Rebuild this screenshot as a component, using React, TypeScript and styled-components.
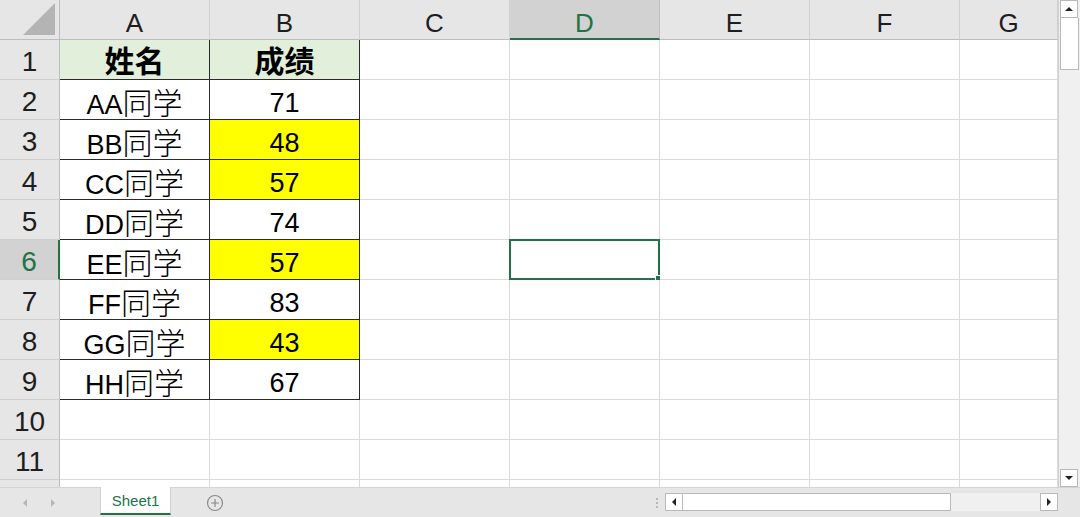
import React from 'react';
import styled, { createGlobalStyle, css } from 'styled-components';

const GlobalStyle = createGlobalStyle`
  html, body {
    margin: 0;
    padding: 0;
    background: #ffffff;
  }
  body {
    font-family: 'Liberation Sans', 'Noto Sans CJK SC', sans-serif;
  }
`;

const green = '#217346';
const gridLine = '#dadada';
const headLine = '#bdbdbd';

const Window = styled.div`
  width: 1080px;
  height: 517px;
  display: flex;
  flex-direction: column;
  overflow: hidden;
`;

const SheetArea = styled.div`
  height: 487px;
  display: flex;
`;

const Grid = styled.div`
  flex: 1;
  display: grid;
  grid-template-columns: 60px repeat(6, 150px) 1fr;
  grid-auto-rows: 40px;
  overflow: hidden;
  align-content: start;
`;

const Corner = styled.div`
  background: #e6e6e6;
  border-right: 1px solid ${headLine};
  border-bottom: 1px solid ${headLine};
  display: flex;
  align-items: flex-end;
  justify-content: flex-end;
  padding: 0 4px 4px 0;
  &::after {
    content: '';
    width: 0;
    height: 0;
    border-left: 32px solid transparent;
    border-bottom: 32px solid #b4b4b4;
  }
`;

const ColHead = styled.div<{ $active?: boolean }>`
  background: ${({ $active }) => ($active ? '#d2d2d2' : '#e6e6e6')};
  color: ${({ $active }) => ($active ? green : '#1e1e1e')};
  border-right: 1px solid ${({ $active }) => ($active ? '#c0c0c0' : '#d0d0d0')};
  border-bottom: ${({ $active }) => ($active ? `2px solid ${green}` : `1px solid ${headLine}`)};
  display: flex;
  align-items: center;
  justify-content: center;
  font-size: 26px;
  line-height: 1;
  padding-top: 7px;
  box-sizing: border-box;
`;

const RowHead = styled.div<{ $active?: boolean }>`
  background: ${({ $active }) => ($active ? '#d2d2d2' : '#e6e6e6')};
  color: ${({ $active }) => ($active ? green : '#1e1e1e')};
  border-right: ${({ $active }) => ($active ? `2px solid ${green}` : `1px solid ${headLine}`)};
  border-bottom: 1px solid #d0d0d0;
  display: flex;
  align-items: center;
  justify-content: center;
  font-size: 28px;
  line-height: 1;
  padding-top: 4px;
  box-sizing: border-box;
`;

type Fill = 'none' | 'title' | 'warn';

const fills: Record<Fill, string> = {
  none: '#ffffff',
  title: '#e2efda',
  warn: '#ffff00',
};

const Cell = styled.div<{ $fill?: Fill; $boxed?: boolean; $selected?: boolean }>`
  position: relative;
  background: ${({ $fill }) => fills[$fill || 'none']};
  border-right: 1px solid ${({ $boxed }) => ($boxed ? '#2b2b2b' : gridLine)};
  border-bottom: 1px solid ${({ $boxed }) => ($boxed ? '#2b2b2b' : gridLine)};
  display: flex;
  align-items: center;
  justify-content: center;
  font-size: 27px;
  color: #000;
  line-height: 27px;
  white-space: nowrap;
  padding-top: ${({ $fill }) => ($fill === 'title' ? 3 : 8)}px;
  box-sizing: border-box;
  ${({ $selected }) =>
    $selected &&
    css`
      &::before {
        content: '';
        position: absolute;
        left: -1px;
        top: -1px;
        right: -1px;
        bottom: -1px;
        border: 2px solid ${green};
      }
      &::after {
        content: '';
        position: absolute;
        right: -3px;
        bottom: -3px;
        width: 5px;
        height: 5px;
        background: ${green};
        border: 1px solid #fff;
      }
    `}
`;

const Value = styled.span`
  display: inline-block;
`;

// Chinese characters sit a little larger than the latin text beside them
const Han = styled.span<{ $bold?: boolean }>`
  font-family: 'Noto Sans CJK SC', sans-serif;
  font-size: 30px;
  line-height: 27px;
  font-weight: ${({ $bold }) => ($bold ? 700 : 300)};
`;

const VScroll = styled.div`
  width: 22px;
  background: #f0f0f0;
  border-left: 1px solid #d0d0d0;
  display: flex;
  flex-direction: column;
  padding: 0 1px;
  box-sizing: border-box;
`;

const ArrowButton = styled.div<{ $dir: 'up' | 'down' | 'left' | 'right' }>`
  width: 18px;
  height: 18px;
  background: #fff;
  border: 1px solid #b9b9b9;
  box-sizing: border-box;
  display: flex;
  align-items: center;
  justify-content: center;
  flex: none;
  &::after {
    content: '';
    width: 0;
    height: 0;
    ${({ $dir }) =>
      $dir === 'up'
        ? css`border-left: 4px solid transparent; border-right: 4px solid transparent; border-bottom: 4px solid #222;`
        : $dir === 'down'
        ? css`border-left: 4px solid transparent; border-right: 4px solid transparent; border-top: 4px solid #222;`
        : $dir === 'left'
        ? css`border-top: 4px solid transparent; border-bottom: 4px solid transparent; border-right: 4px solid #222;`
        : css`border-top: 4px solid transparent; border-bottom: 4px solid transparent; border-left: 4px solid #222;`}
  }
`;

const VThumb = styled.div`
  height: 52px;
  background: #fff;
  border: 1px solid #b9b9b9;
  border-top: none;
  box-sizing: border-box;
`;

const VTrack = styled.div`
  flex: 1;
`;

const TabBar = styled.div`
  height: 30px;
  background: #e6e6e6;
  border-top: 1px solid #d4d4d4;
  box-sizing: border-box;
  display: flex;
  align-items: stretch;
`;

const NavArrows = styled.div`
  width: 100px;
  display: flex;
  align-items: center;
  gap: 24px;
  padding-left: 23px;
  box-sizing: border-box;
`;

const NavArrow = styled.span<{ $right?: boolean }>`
  width: 0;
  height: 0;
  border-top: 4px solid transparent;
  border-bottom: 4px solid transparent;
  ${({ $right }) =>
    $right ? 'border-left: 4px solid #b6b6b6;' : 'border-right: 4px solid #b6b6b6;'}
`;

const SheetTab = styled.div`
  width: 71px;
  height: 28px;
  margin-top: -1px;
  background: #fff;
  border-bottom: 2px solid ${green};
  border-left: 1px solid #d0d0d0;
  border-right: 1px solid #d0d0d0;
  box-sizing: border-box;
  display: flex;
  align-items: center;
  justify-content: center;
  color: ${green};
  font-family: 'Liberation Sans', 'Noto Sans', sans-serif;
  font-size: 15px;
`;

const AddSheet = styled.div`
  width: 88px;
  display: flex;
  align-items: center;
  justify-content: center;
`;

const Spacer = styled.div`
  flex: 1;
`;

const Dots = styled.div`
  width: 17px;
  display: flex;
  flex-direction: column;
  align-items: center;
  justify-content: center;
  gap: 2px;
  span {
    width: 2px;
    height: 2px;
    background: #a8a8a8;
    border-radius: 50%;
  }
`;

const HScroll = styled.div`
  width: 393px;
  display: flex;
  align-items: center;
  margin-top: -1px;
`;

const HThumb = styled.div`
  width: 268px;
  height: 18px;
  background: #fff;
  border: 1px solid #b9b9b9;
  border-left: none;
  box-sizing: border-box;
`;

const HTrack = styled.div`
  flex: 1;
  height: 18px;
  background: #f0f0f0;
`;

const RightCorner = styled.div`
  width: 22px;
`;

const cols = ['A', 'B', 'C', 'D', 'E', 'F', 'G'];
const visibleRows = 11;

interface Student {
  name: string;
  score: number;
}

const students: Student[] = [
  { name: 'AA同学', score: 71 },
  { name: 'BB同学', score: 48 },
  { name: 'CC同学', score: 57 },
  { name: 'DD同学', score: 74 },
  { name: 'EE同学', score: 57 },
  { name: 'FF同学', score: 83 },
  { name: 'GG同学', score: 43 },
  { name: 'HH同学', score: 67 },
];

const activeRow = 6;
const activeCol = 'D';

const Text = ({ value, bold }: { value: string; bold?: boolean }) => (
  <Value>
    {value.split(/([\u4e00-\u9fff]+)/).map((part, i) =>
      /[\u4e00-\u9fff]/.test(part) ? (
        <Han key={i} $bold={bold}>{part}</Han>
      ) : (
        part
      ),
    )}
  </Value>
);

const Row = ({ index }: { index: number }) => {
  const rowNo = index + 1;
  let a: React.ReactNode = null;
  let b: React.ReactNode = null;
  let fillB: Fill = 'none';
  let fillA: Fill = 'none';
  let boxed = false;
  if (rowNo === 1) {
    a = <Text value="姓名" bold />;
    b = <Text value="成绩" bold />;
    fillA = fillB = 'title';
    boxed = true;
  } else if (rowNo <= students.length + 1) {
    const s = students[rowNo - 2];
    a = <Text value={s.name} />;
    b = s.score;
    fillB = s.score < 60 ? 'warn' : 'none';
    boxed = true;
  }
  return (
    <>
      <RowHead $active={rowNo === activeRow}>{rowNo <= visibleRows ? rowNo : ''}</RowHead>
      <Cell $fill={fillA} $boxed={boxed}>{a}</Cell>
      <Cell $fill={fillB} $boxed={boxed}>{b}</Cell>
      {cols.slice(2).map((c) => (
        <Cell key={c} $selected={rowNo === activeRow && c === activeCol} />
      ))}
    </>
  );
};

export default function App() {
  return (
    <Window>
      <GlobalStyle />
      <SheetArea>
        <Grid>
          <Corner />
          {cols.map((c) => (
            <ColHead key={c} $active={c === activeCol}>{c}</ColHead>
          ))}
          {Array.from({ length: visibleRows + 1 }, (_, i) => (
            <Row key={i} index={i} />
          ))}
        </Grid>
        <VScroll>
          <ArrowButton $dir="up" />
          <VThumb />
          <VTrack />
          <ArrowButton $dir="down" />
        </VScroll>
      </SheetArea>
      <TabBar>
        <NavArrows>
          <NavArrow />
          <NavArrow $right />
        </NavArrows>
        <SheetTab>Sheet1</SheetTab>
        <AddSheet>
          <svg width="18" height="18" viewBox="0 0 18 18">
            <circle cx="9" cy="9" r="7.5" fill="none" stroke="#8a8a8a" strokeWidth="1.2" />
            <path d="M9 5v8M5 9h8" stroke="#8a8a8a" strokeWidth="1.2" />
          </svg>
        </AddSheet>
        <Spacer />
        <Dots>
          <span />
          <span />
          <span />
        </Dots>
        <HScroll>
          <ArrowButton $dir="left" />
          <HThumb />
          <HTrack />
          <ArrowButton $dir="right" />
        </HScroll>
        <RightCorner />
      </TabBar>
    </Window>
  );
}
